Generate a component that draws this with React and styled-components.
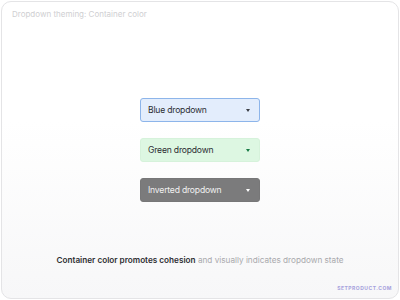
import React from 'react'
import styled, { createGlobalStyle } from 'styled-components'

const GlobalStyle = createGlobalStyle`
  html, body {
    margin: 0;
    padding: 0;
    background: #ffffff;
  }
  body {
    font-family: Inter, "Noto Sans", sans-serif;
  }
`

const Card = styled.div`
  box-sizing: border-box;
  width: 398px;
  height: 298px;
  margin: 1px;
  border: 1px solid #e4e4e6;
  border-radius: 10px;
  background: linear-gradient(180deg, #ffffff 0%, #ffffff 40%, #f7f7f8 100%);
  display: flex;
  flex-direction: column;
  padding: 6px 6px 0 10px;
`

const Title = styled.div`
  font-size: 8px;
  line-height: 12px;
  color: #cfcfd2;
`

const Stack = styled.div`
  margin-top: 78px;
  display: flex;
  flex-direction: column;
  align-items: center;
  gap: 16px;
`

const themes = {
  blue: { bg: '#e3edfc', border: '#8db5ea', text: '#2b2d33', arrow: '#3a3d44' },
  green: { bg: '#ddf7e2', border: '#d6f2db', text: '#2b2d33', arrow: '#177a45' },
  inverted: { bg: '#7b7b7c', border: '#777778', text: '#f1f1f1', arrow: '#ffffff' },
}

const Box = styled.div`
  box-sizing: border-box;
  width: 120px;
  height: 24px;
  margin-left: -4px;
  border-radius: 3px;
  border: 1px solid ${p => themes[p.$tone].border};
  background: ${p => themes[p.$tone].bg};
  color: ${p => themes[p.$tone].text};
  display: flex;
  align-items: center;
  justify-content: space-between;
  padding: 0 9px 0 7px;
  font-size: 8.6px;
  font-weight: 400;
  letter-spacing: -0.2px;
`

const Caret = styled.span`
  width: 0;
  height: 0;
  border-left: 2.5px solid transparent;
  border-right: 2.5px solid transparent;
  border-top: 3px solid ${p => themes[p.$tone].arrow};
`

const Caption = styled.div`
  margin-top: 52px;
  text-align: center;
  margin-left: -4px;
  font-size: 8.2px;
  line-height: 12px;
  color: #a9a9ad;
  b {
    color: #2e2f33;
    font-weight: 600;
  }
`

const Footer = styled.div`
  margin-top: 18px;
  align-self: flex-end;
  font-size: 5px;
  line-height: 8px;
  font-weight: 700;
  letter-spacing: 0.5px;
  color: #a6a2dd;
`

const Dropdown = ({ tone, children }) => (
  <Box $tone={tone}>
    <span>{children}</span>
    <Caret $tone={tone} />
  </Box>
)

export default function App() {
  return (
    <>
      <GlobalStyle />
      <Card>
        <Title>Dropdown theming: Container color</Title>
        <Stack>
          <Dropdown tone="blue">Blue dropdown</Dropdown>
          <Dropdown tone="green">Green dropdown</Dropdown>
          <Dropdown tone="inverted">Inverted dropdown</Dropdown>
        </Stack>
        <Caption>
          <b>Container color promotes cohesion</b> and visually indicates dropdown state
        </Caption>
        <Footer>SETPRODUCT.COM</Footer>
      </Card>
    </>
  )
}
